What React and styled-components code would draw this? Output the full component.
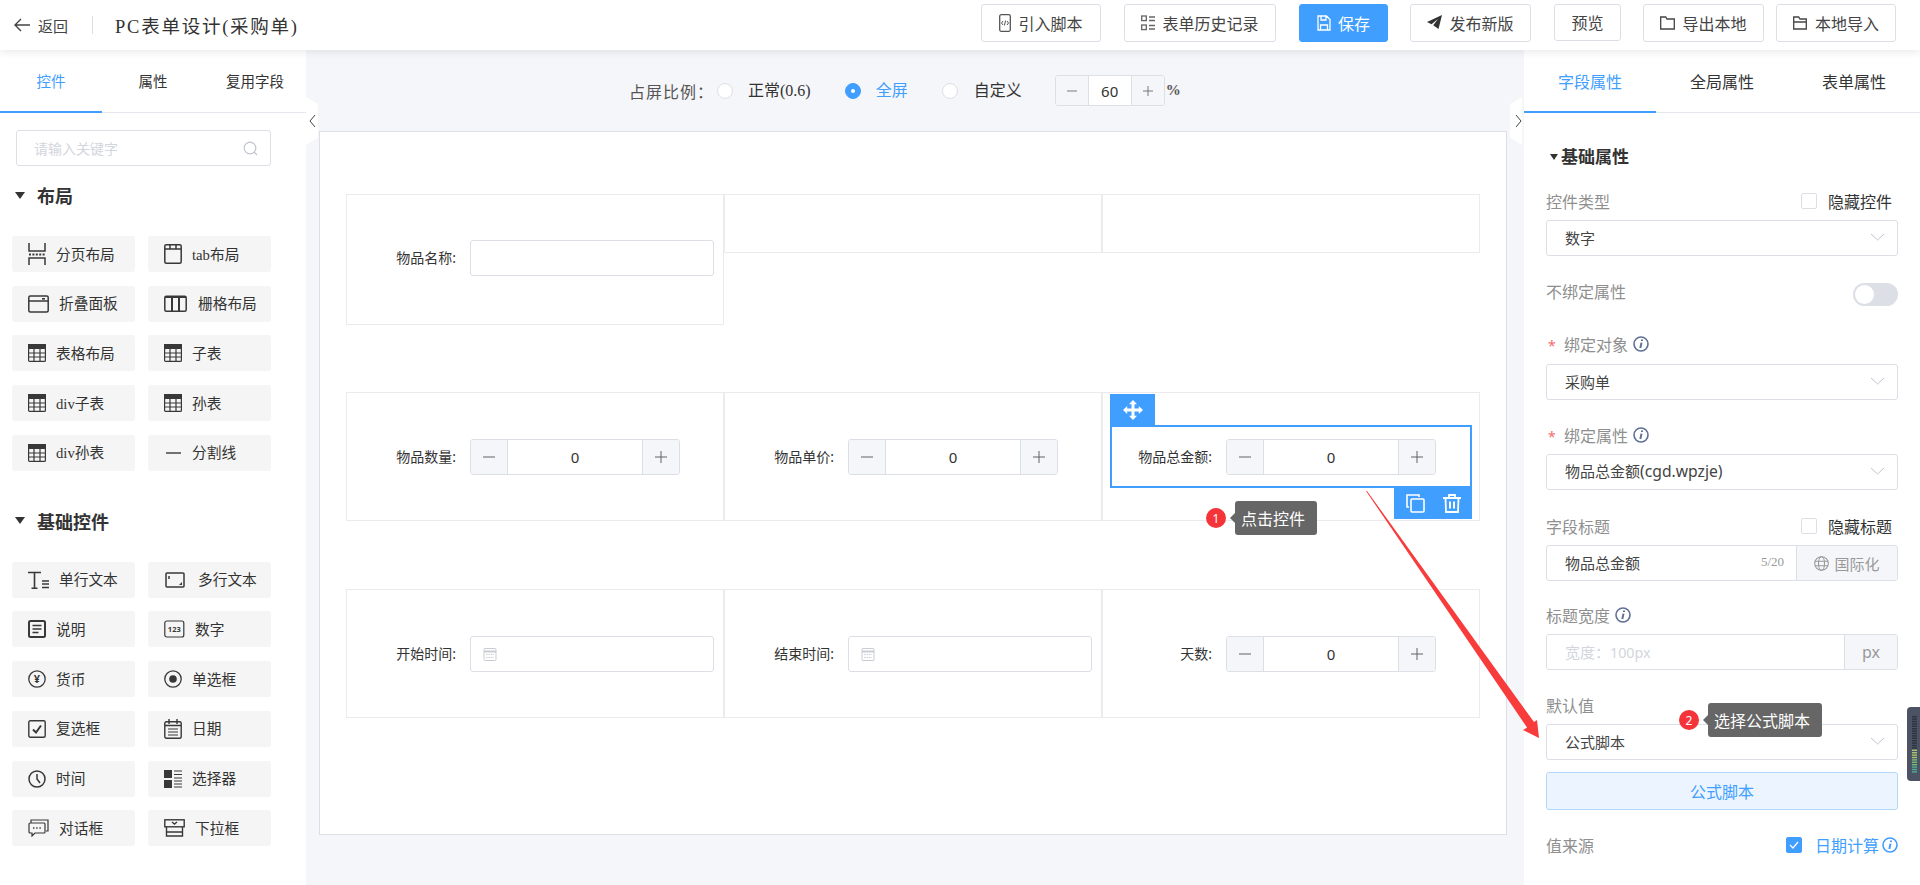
import React from "react";
import styled, { createGlobalStyle } from "styled-components";

const SERIF = `"Liberation Serif", "Noto Sans CJK SC", serif`;
const SANS = `"Noto Sans", "Noto Sans CJK SC", sans-serif`;
const BLUE = "#409eff";
const LINE = "#dcdfe6";

const Global = createGlobalStyle`
  html, body { margin: 0; padding: 0; background: #fff; overflow: hidden; }
  * { box-sizing: border-box; }
  body { font-family: ${SERIF}; color: #333; }
`;

const Page = styled.div`
  position: relative;
  width: 1920px;
  height: 885px;
  overflow: hidden;
  display: flex;
  flex-direction: column;
`;

const Header = styled.header`
  position: relative;
  z-index: 3;
  height: 50px;
  flex: none;
  display: flex;
  align-items: center;
  background: #fff;
  box-shadow: 0 2px 8px rgba(0, 0, 0, 0.09);
`;
const Back = styled.div`
  display: flex;
  align-items: center;
  gap: 8px;
  margin-left: 14px;
  font-size: 15px;
  color: #444;
`;
const Divider = styled.span`
  width: 1px;
  height: 18px;
  background: #dcdfe6;
  margin: 0 22px 0 24px;
`;
const Title = styled.h1`
  margin: 0;
  font-size: 18.5px;
  font-weight: 400;
  letter-spacing: 1.75px;
  color: #333;
  white-space: nowrap;
`;
const Actions = styled.div`
  margin-left: auto;
  margin-right: 24px;
  display: flex;
  align-items: flex-start;
  padding-bottom: 5px;
`;
const TopButton = styled.button`
  height: ${(p) => p.$h || 38}px;
  width: ${(p) => p.$w}px;
  margin-left: ${(p) => p.$gap}px;
  display: flex;
  align-items: center;
  justify-content: center;
  gap: 7px;
  padding: 0;
  border: 1px solid ${(p) => (p.$primary ? BLUE : LINE)};
  border-radius: 3px;
  background: ${(p) => (p.$primary ? BLUE : "#fff")};
  color: ${(p) => (p.$primary ? "#fff" : "#444")};
  font-family: ${SERIF};
  font-size: 16px;
`;

const Body = styled.div`
  position: relative;
  flex: 1;
  display: flex;
  min-height: 0;
`;

const LeftPanel = styled.aside`
  width: 306px;
  flex: none;
  background: #fff;
  display: flex;
  flex-direction: column;
`;
const TabBar = styled.div`
  height: 63px;
  flex: none;
  display: grid;
  grid-template-columns: repeat(3, 1fr);
  border-bottom: 1px solid #e4e7ed;
`;
const Tab = styled.div`
  display: flex;
  align-items: center;
  justify-content: center;
  font-size: ${(p) => p.$size}px;
  color: ${(p) => (p.$active ? BLUE : "#333")};
  margin-bottom: -1px;
  border-bottom: 2px solid ${(p) => (p.$active ? BLUE : "transparent")};
`;
const Search = styled.div`
  margin: 17px 0 0 16px;
  width: 255px;
  height: 36px;
  flex: none;
  display: flex;
  align-items: center;
  justify-content: space-between;
  padding: 0 12px 0 17px;
  border: 1px solid ${LINE};
  border-radius: 3px;
  font-size: 14px;
  color: #d3d6dc;
`;
const GroupTitle = styled.div`
  height: 30px;
  margin: ${(p) => p.$top}px 0 25px 15px;
  padding-bottom: 2px;
  flex: none;
  display: flex;
  align-items: center;
  gap: 12px;
  font-family: ${SANS};
  font-size: 18px;
  font-weight: 700;
  color: #333;
`;
const Caret = styled.span`
  width: 0;
  height: 0;
  border-left: ${(p) => p.$s || 5.5}px solid transparent;
  border-right: ${(p) => p.$s || 5.5}px solid transparent;
  border-top: 7px solid #333;
`;
const Palette = styled.div`
  display: grid;
  grid-template-columns: 123px 123px;
  grid-auto-rows: 36px;
  column-gap: 13px;
  row-gap: 13.7px;
  margin-left: 12px;
`;
const PaletteItem = styled.div`
  display: flex;
  align-items: center;
  gap: 10px;
  padding-left: 16px;
  background: #f5f5f5;
  border-radius: 3px;
  font-size: 14.7px;
  color: #333;
  white-space: nowrap;
`;
const PaletteName = styled.span`
  margin-top: -2px;
`;
const IconSlot = styled.span`
  flex: none;
  width: ${(p) => p.$w}px;
  display: flex;
  align-items: center;
  color: #383838;
`;

const Canvas = styled.main`
  flex: 1;
  min-width: 0;
  background: #f5f6fa;
  display: flex;
  flex-direction: column;
`;
const ScaleBar = styled.div`
  height: 81px;
  flex: none;
  display: flex;
  align-items: center;
  padding-left: 323px;
`;
const ScaleLabel = styled.span`
  font-size: 16px;
  letter-spacing: 1px;
  color: #555;
  width: 88px;
  white-space: nowrap;
`;
const RadioItem = styled.label`
  display: flex;
  align-items: center;
  gap: ${(p) => p.$inner || 15}px;
  margin-right: ${(p) => p.$gap}px;
  font-size: 16px;
  color: ${(p) => (p.$on ? BLUE : "#333")};
  white-space: nowrap;
`;
const RadioText = styled.span`
  margin-top: -3px;
`;
const RadioDot = styled.span`
  width: 16px;
  height: 16px;
  border-radius: 50%;
  display: flex;
  align-items: center;
  justify-content: center;
  background: ${(p) => (p.$on ? BLUE : "#fff")};
  border: 1px solid ${(p) => (p.$on ? BLUE : LINE)};
  &::after {
    content: "";
    width: 4px;
    height: 4px;
    border-radius: 50%;
    background: ${(p) => (p.$on ? "#fff" : "transparent")};
  }
`;
const Percent = styled.span`
  font-family: ${SERIF};
  font-size: 15px;
  font-weight: 700;
  margin-left: 1px;
  color: #555;
`;

const Stepper = styled.div`
  width: ${(p) => p.$w}px;
  height: ${(p) => p.$h}px;
  flex: none;
  display: grid;
  grid-template-columns: ${(p) => p.$side}px 1fr ${(p) => p.$side}px;
  border: 1px solid ${LINE};
  border-radius: 3px;
  overflow: hidden;
  background: #fff;
`;
const StepBtn = styled.span`
  display: flex;
  align-items: center;
  justify-content: center;
  background: #f5f6fa;
  color: #606266;
  &:first-child { border-right: 1px solid ${LINE}; }
  &:last-child { border-left: 1px solid ${LINE}; }
`;
const StepValue = styled.span`
  display: flex;
  align-items: center;
  justify-content: center;
  font-family: ${SANS};
  font-size: 15px;
  color: #333;
`;

const Sheet = styled.div`
  width: 1188px;
  height: 704px;
  margin-left: 13px;
  flex: none;
  background: #fff;
  border: 1px solid ${LINE};
  padding: 62px 0 0 26px;
`;
const Row = styled.div`
  display: grid;
  grid-template-columns: repeat(3, 378px);
  align-items: start;
  margin-bottom: ${(p) => p.$gap || 0}px;
`;
const Cell = styled.div`
  position: relative;
  height: ${(p) => p.$h}px;
  border: 1px solid #ebebee;
  display: flex;
  align-items: center;
  padding-bottom: ${(p) => p.$lift || 0}px;
`;
const FieldLabel = styled.span`
  width: 109px;
  margin-right: 14px;
  padding-bottom: 2px;
  flex: none;
  text-align: right;
  font-family: ${SANS};
  font-size: 14px;
  color: #333;
  white-space: nowrap;
`;
const TextBox = styled.div`
  width: 244px;
  height: 36px;
  flex: none;
  display: flex;
  align-items: center;
  padding-left: 12px;
  border: 1px solid ${LINE};
  border-radius: 3px;
  background: #fff;
`;
const SelectFrame = styled.div`
  position: absolute;
  left: 7px;
  right: 7px;
  top: 32px;
  height: 63px;
  border: 2px solid ${BLUE};
  pointer-events: none;
`;
const MoveHandle = styled.div`
  position: absolute;
  left: -2px;
  top: -33px;
  width: 45px;
  height: 31px;
  background: ${BLUE};
  display: flex;
  align-items: center;
  justify-content: center;
`;
const ActionTray = styled.div`
  position: absolute;
  right: -2px;
  top: 61px;
  width: 78px;
  height: 31px;
  background: ${BLUE};
  display: flex;
  align-items: center;
  justify-content: center;
  gap: 18px;
`;

const RightPanel = styled.aside`
  width: 396px;
  flex: none;
  background: #fff;
  display: flex;
  flex-direction: column;
`;
const RightBody = styled.div`
  padding: 0 22px;
  font-family: ${SANS};
`;
const SectionTitle = styled.div`
  height: 30px;
  margin-top: 28px;
  padding-left: 4px;
  padding-bottom: 2px;
  display: flex;
  align-items: center;
  gap: 3px;
  font-size: 17px;
  font-weight: 700;
  color: #333;
  ${Caret} { border-top-width: 6px; margin-top: 4px; }
`;
const PropRow = styled.div`
  height: 24px;
  margin-top: ${(p) => p.$top}px;
  display: flex;
  align-items: center;
  justify-content: space-between;
`;
const PropLabel = styled.span`
  display: flex;
  align-items: center;
  gap: 5px;
  padding-bottom: 2px;
  font-size: 16px;
  color: #8f8f8f;
  white-space: nowrap;
`;
const Star = styled.span`
  color: #f56c6c;
  font-size: 14px;
  width: 12px;
  margin-left: 2px;
  margin-right: -1px;
  margin-top: 2px;
`;
const CheckOption = styled.span`
  display: flex;
  align-items: center;
  gap: ${(p) => p.$gap ?? 12}px;
  margin-right: ${(p) => p.$right ?? 6}px;
  padding-bottom: 2px;
  font-size: 16px;
  color: ${(p) => (p.$blue ? BLUE : "#333")};
  white-space: nowrap;
`;
const TightInfo = styled.span`
  display: flex;
  margin-left: -10px;
`;
const Box = styled.span`
  width: 16px;
  height: 16px;
  flex: none;
  margin-left: ${(p) => (p.$on ? 0 : 1)}px;
  margin-right: ${(p) => (p.$on ? 0 : -1)}px;
  display: flex;
  align-items: center;
  justify-content: center;
  border-radius: 2px;
  border: 1px solid ${(p) => (p.$on ? BLUE : LINE)};
  background: ${(p) => (p.$on ? BLUE : "#fff")};
`;
const Select = styled.div`
  height: 36px;
  margin-top: ${(p) => p.$top || 6}px;
  display: flex;
  align-items: center;
  justify-content: space-between;
  padding: 0 12px 2px 18px;
  border: 1px solid ${LINE};
  border-radius: 3px;
  font-size: 15px;
  color: #444;
`;
const LatinValue = styled.span`
  font-size: ${(p) => p.$size}px;
`;
const Switch = styled.span`
  width: 45px;
  height: 23px;
  margin-top: 5px;
  border-radius: 12px;
  background: #dcdfe6;
  display: flex;
  align-items: center;
  padding-left: 2px;
  &::after {
    content: "";
    width: 19px;
    height: 19px;
    border-radius: 50%;
    background: #fff;
  }
`;
const InputGroup = styled.div`
  height: 36px;
  margin-top: 6px;
  display: grid;
  grid-template-columns: ${(p) => p.$cols};
  border: 1px solid ${LINE};
  border-radius: 3px;
  overflow: hidden;
`;
const GroupInput = styled.div`
  display: flex;
  align-items: center;
  justify-content: space-between;
  padding: 0 12px 2px 18px;
  font-size: 15px;
  color: ${(p) => (p.$placeholder ? "#d3d6dc" : "#444")};
`;
const Counter = styled.span`
  font-family: ${SERIF};
  font-size: 13px;
  color: #999;
`;
const Addon = styled.div`
  display: flex;
  align-items: center;
  justify-content: center;
  gap: 5px;
  background: #f5f6fa;
  border-left: 1px solid ${LINE};
  font-size: ${(p) => p.$size || 15}px;
  color: #999;
`;
const ScriptButton = styled.button`
  display: block;
  width: 100%;
  height: 38px;
  margin-top: 12px;
  border: 1px solid #b3d8ff;
  border-radius: 3px;
  background: #ecf5ff;
  color: ${BLUE};
  font-family: ${SANS};
  font-size: 16px;
`;

const Handle = styled.div`
  position: absolute;
  top: 47px;
  left: ${(p) => p.$left}px;
  width: 12px;
  height: 48px;
  background: #fff;
  clip-path: ${(p) =>
    p.$flip
      ? "polygon(0 15%, 100% 0, 100% 100%, 0 85%)"
      : "polygon(0 0, 100% 15%, 100% 85%, 0 100%)"};
  display: flex;
  align-items: center;
  justify-content: ${(p) => (p.$flip ? "flex-end" : "center")};
  z-index: 2;
`;
const Callout = styled.div`
  position: absolute;
  left: ${(p) => p.$left}px;
  top: ${(p) => p.$top}px;
  z-index: 5;
  display: flex;
  align-items: center;
  gap: 9px;
`;
const Badge = styled.span`
  width: 20px;
  height: 20px;
  border-radius: 50%;
  background: #f5343a;
  color: #fff;
  font-family: ${SANS};
  font-size: 12px;
  display: flex;
  align-items: center;
  justify-content: center;
`;
const Tip = styled.span`
  position: relative;
  height: 34px;
  padding: 0 12px 0 6px;
  display: flex;
  align-items: center;
  border-radius: 3px;
  background: #666;
  color: #fff;
  font-family: ${SANS};
  font-size: 16px;
  white-space: nowrap;
  &::before {
    content: "";
    position: absolute;
    left: -5px;
    top: 12px;
    border-top: 5px solid transparent;
    border-bottom: 5px solid transparent;
    border-right: 5px solid #666;
  }
`;
const ArrowLayer = styled.svg`
  position: absolute;
  left: 0;
  top: 0;
  z-index: 4;
  pointer-events: none;
`;
const MeterWidget = styled.svg`
  position: absolute;
  right: 0;
  top: 707px;
  z-index: 5;
`;

/* ---------- drawings ---------- */
const S = ({ w, h, children, sw = 1.5, color = "currentColor", fill = "none" }) => (
  <svg width={w} height={h} viewBox={`0 0 ${w} ${h}`} fill={fill} stroke={color} strokeWidth={sw}>
    {children}
  </svg>
);
const IPage = () => (
  <S w={18} h={22}><path d="M1 0v8h16V0" /><path d="M1 11.500h16" strokeDasharray="2 1.400" strokeWidth="2" /><path d="M1 22v-7h16v7" /></S>
);
const ITab = () => (
  <S w={18} h={20}><rect x=".8" y=".8" width="16.4" height="18.4" rx="1.5" /><path d="M1 5h16M6 1v4M12 1v4" /></S>
);
const ICollapse = () => (
  <S w={21} h={18}><rect x=".8" y="1" width="19.4" height="16" rx="1.5" /><path d="M1 6h19" /><path d="M14 3h3v1.6h-3z" fill="currentColor" stroke="none" /></S>
);
const IGrid = () => (
  <S w={24} h={17}><rect x=".8" y="1.2" width="21.4" height="15" rx="1.5" /><path d="M8 1v15M15 1v15" strokeWidth="2" /><path d="M1 2h21" strokeWidth="2" /></S>
);
const ITable = () => (
  <S w={18} h={18} sw={1.2}>
    <rect x=".6" y=".6" width="16.8" height="16.8" rx="1" />
    <path d="M0 0h18v5H0z" fill="currentColor" stroke="none" />
    <path d="M6 5v12M12 5v12M1 9h16M1 13h16" />
  </S>
);
const ILine = () => <S w={18} h={18} sw={1.4}><path d="M2 9h15" /></S>;
const IText = () => (
  <S w={21} h={18} sw={1.6}><path d="M0 1.5h13M6.5 1.5V18M3.5 17.4h6" /><path d="M14 10h7M14 13h7M14 16.5h7" strokeWidth="1.3" /></S>
);
const IArea = () => (
  <S w={24} h={16}><rect x="2" y="1" width="18" height="14" rx="1" /><path d="M5 4v3" /><path d="M18 13h-3l3-3z" fill="currentColor" stroke="none" /></S>
);
const INote = () => (
  <S w={18} h={18} sw={2}><rect x="1" y="1" width="16" height="16" rx="1.5" /><path d="M4.500 5.500h9M4.500 9h9M4.500 12.500h6" strokeWidth="1.6" /></S>
);
const INumber = () => (
  <S w={21} h={18} sw={1.2}>
    <rect x=".8" y="1" width="19" height="16" rx="2" />
    <text x="10.3" y="11.8" textAnchor="middle" fontSize="7.5" fontWeight="700" fontFamily={SANS} fill="currentColor" stroke="none">123</text>
  </S>
);
const ICurrency = () => (
  <S w={18} h={18} sw={1.3}>
    <circle cx="9" cy="9" r="8.2" />
    <text x="9" y="13" textAnchor="middle" fontSize="11" fontWeight="700" fontFamily={SANS} fill="currentColor" stroke="none">¥</text>
  </S>
);
const IRadio = () => (
  <S w={18} h={18} sw={1.3}><circle cx="9" cy="9" r="8.2" /><circle cx="9" cy="9" r="3.8" fill="currentColor" stroke="none" /></S>
);
const ICheck = () => (
  <S w={18} h={18} sw={1.4}><rect x=".8" y=".8" width="16.4" height="16.4" rx="1.5" /><path d="M5 9.500l3 3 5-7" strokeWidth="2" /></S>
);
const IDate = () => (
  <S w={18} h={20} sw={1.4}>
    <rect x=".8" y="2.8" width="16.4" height="16.4" rx="1.5" />
    <path d="M5 0v5M13 0v5M1 6.500h16" />
    <path d="M4 10h10M4 13h10M4 16h10" strokeWidth="1.2" />
  </S>
);
const IClock = () => (
  <S w={18} h={18} sw={1.5}><circle cx="9" cy="9" r="8" /><path d="M9 4v5l3 4" /></S>
);
const IPicker = () => (
  <S w={18} h={18} sw={1.2}>
    <path d="M0 0h8v8H0zM0 10h8v8H0z" fill="currentColor" stroke="none" />
    <path d="M10 1h8M10 4.500h8M10 8h8M10 11h8M10 14h8M10 17h8" />
  </S>
);
const IDialog = () => (
  <S w={21} h={18} sw={1.2}>
    <path d="M3 4V1h17v11h-2" />
    <path d="M2 4h14a1 1 0 0 1 1 1v8a1 1 0 0 1-1 1H7l-3 3v-3H2a1 1 0 0 1-1-1V5a1 1 0 0 1 1-1z" />
    <path d="M5 9h1.400M8.200 9h1.400M11.400 9h1.400" strokeWidth="1.6" />
  </S>
);
const IDrop = () => (
  <S w={21} h={18} sw={1.4}>
    <rect x=".8" y=".8" width="19.4" height="7" />
    <path d="M2.500 8v9h16V8M2.500 13h16M8 3l2.500 2L13 3" />
  </S>
);

const Chevron = ({ w = 15 }) => (
  <svg width={w} height="8" viewBox="0 0 15 8" fill="none" stroke="#c0c4cc"><path d="M1 1l6.500 6 6.500-6" /></svg>
);
const SideChevron = ({ flip }) => (
  <svg width="7" height="14" viewBox="0 0 7 14" fill="none" stroke="#444" style={flip ? { transform: "scaleX(-1)" } : undefined}>
    <path d="M6 1L1 7l5 6" />
  </svg>
);
const Minus = ({ s = 12 }) => (
  <svg width={s} height={s} viewBox="0 0 12 12" stroke="currentColor"><path d="M0 6h12" /></svg>
);
const Plus = ({ s = 12 }) => (
  <svg width={s} height={s} viewBox="0 0 12 12" stroke="currentColor"><path d="M0 6h12M6 0v12" /></svg>
);
const Info = ({ color = "#5f6f95" }) => (
  <svg width="16" height="16" viewBox="0 0 16 16" fill="none" stroke={color} strokeWidth="1.6">
    <circle cx="8" cy="8" r="7" />
    <path d="M9 3.600v1.300" strokeWidth="2" />
    <path d="M8.500 6.600l-1.200 5.400" strokeWidth="2" />
  </svg>
);
const CalendarMini = () => (
  <svg width="14" height="14" viewBox="0 0 14 14" fill="none" stroke="#c9ccd3">
    <rect x="1" y="1.500" width="12" height="12" rx="1" />
    <path d="M1 4.500h12" strokeWidth="2" />
    <path d="M3 7.500h8M3 10.500h8" strokeDasharray="1.500 1" />
  </svg>
);
const Stepbox = ({ value = "0" }) => (
  <Stepper $w={210} $h={36} $side={37}>
    <StepBtn><Minus /></StepBtn>
    <StepValue>{value}</StepValue>
    <StepBtn><Plus /></StepBtn>
  </Stepper>
);

const layoutItems = [
  ["分页布局", IPage, 18], ["tab布局", ITab, 18],
  ["折叠面板", ICollapse, 21], ["栅格布局", IGrid, 24],
  ["表格布局", ITable, 18], ["子表", ITable, 18],
  ["div子表", ITable, 18], ["孙表", ITable, 18],
  ["div孙表", ITable, 18], ["分割线", ILine, 18],
];
const basicItems = [
  ["单行文本", IText, 21], ["多行文本", IArea, 24],
  ["说明", INote, 18], ["数字", INumber, 21],
  ["货币", ICurrency, 18], ["单选框", IRadio, 18],
  ["复选框", ICheck, 18], ["日期", IDate, 18],
  ["时间", IClock, 18], ["选择器", IPicker, 18],
  ["对话框", IDialog, 21], ["下拉框", IDrop, 21],
];

const PaletteGrid = ({ items }) => (
  <Palette>
    {items.map(([name, Icon, w]) => (
      <PaletteItem key={name}>
        <IconSlot $w={w}><Icon /></IconSlot>
        <PaletteName>{name}</PaletteName>
      </PaletteItem>
    ))}
  </Palette>
);

export default function App() {
  return (
    <Page>
      <Global />
      <Header>
        <Back>
          <svg width="16" height="14" viewBox="0 0 16 14" fill="none" stroke="#444" strokeWidth="1.400"><path d="M16 7H1M7 1L1 7l6 6" /></svg>
          返回
        </Back>
        <Divider />
        <Title>PC表单设计(采购单)</Title>
        <Actions>
          <TopButton $w={120} $gap={0}>
            <svg width="12" height="18" viewBox="0 0 12 18" fill="none" stroke="#555" strokeWidth="1.300">
              <rect x=".7" y=".7" width="10.600" height="16.600" rx="1.500" />
              <path d="M4 7L2.500 9 4 11M8 7l1.500 2L8 11M6.600 6.500l-1.200 5" strokeWidth="1" />
            </svg>
            引入脚本
          </TopButton>
          <TopButton $w={152} $gap={23}>
            <svg width="14" height="16" viewBox="0 0 14 16" fill="none" stroke="#666" strokeWidth="1.300">
              <rect x=".7" y="1" width="4.600" height="4.600" />
              <rect x=".7" y="10" width="4.600" height="4.600" />
              <path d="M8 2h6M8 5.500h6M8 10.500h6M8 14h6" />
            </svg>
            表单历史记录
          </TopButton>
          <TopButton $w={89} $gap={23} $primary>
            <svg width="14" height="16" viewBox="0 0 14 16" fill="none" stroke="#fff" strokeWidth="1.300">
              <path d="M1 1h8.500L13 4.500V15H1zM4 1v4h5V1M3.500 15v-5h7v5" />
            </svg>
            保存
          </TopButton>
          <TopButton $w={121} $gap={22}>
            <svg width="15" height="15" viewBox="0 0 15 15" fill="#333"><path d="M15 0L0 7l4.500 2.200L11 4l-4.800 6.300L11.500 14z" /></svg>
            发布新版
          </TopButton>
          <TopButton $w={67} $gap={23} $h={37}>预览</TopButton>
          <TopButton $w={121} $gap={22}>
            <svg width="15" height="14" viewBox="0 0 15 14" fill="none" stroke="#444" strokeWidth="1.300"><path d="M.7 1h5l1.300 2h7.300v10H.7z" /></svg>
            导出本地
          </TopButton>
          <TopButton $w={120} $gap={12}>
            <svg width="15" height="14" viewBox="0 0 15 14" fill="none" stroke="#444" strokeWidth="1.300"><path d="M.7 13V1h5l1.300 2h6.300v3M.7 13h12.600V6H.7z" /></svg>
            本地导入
          </TopButton>
        </Actions>
      </Header>

      <Body>
        <LeftPanel>
          <TabBar>
            <Tab $active $size={14.500}>控件</Tab>
            <Tab $size={14.500}>属性</Tab>
            <Tab $size={14.500}>复用字段</Tab>
          </TabBar>
          <Search>
            请输入关键字
            <svg width="15" height="15" viewBox="0 0 15 15" fill="none" stroke="#c0c4cc" strokeWidth="1.200"><circle cx="7" cy="7" r="5.800" /><path d="M11 11l3 3" /></svg>
          </Search>
          <GroupTitle $top={15}><Caret />布局</GroupTitle>
          <PaletteGrid items={layoutItems} />
          <GroupTitle $top={36}><Caret />基础控件</GroupTitle>
          <PaletteGrid items={basicItems} />
        </LeftPanel>

        <Canvas>
          <ScaleBar>
            <ScaleLabel>占屏比例：</ScaleLabel>
            <RadioItem $gap={34}><RadioDot /><RadioText>正常(0.6)</RadioText></RadioItem>
            <RadioItem $on $gap={34}><RadioDot $on /><RadioText>全屏</RadioText></RadioItem>
            <RadioItem $gap={33} $inner={16}><RadioDot /><RadioText>自定义</RadioText></RadioItem>
            <Stepper $w={110} $h={31} $side={33}>
              <StepBtn><Minus s={10} /></StepBtn>
              <StepValue>60</StepValue>
              <StepBtn><Plus s={10} /></StepBtn>
            </Stepper>
            <Percent>%</Percent>
          </ScaleBar>
          <Sheet>
            <Row $gap={67}>
              <Cell $h={131} $lift={3}>
                <FieldLabel>物品名称:</FieldLabel>
                <TextBox />
              </Cell>
              <Cell $h={59} />
              <Cell $h={59} />
            </Row>
            <Row $gap={68}>
              <Cell $h={129}>
                <FieldLabel>物品数量:</FieldLabel>
                <Stepbox />
              </Cell>
              <Cell $h={129}>
                <FieldLabel>物品单价:</FieldLabel>
                <Stepbox />
              </Cell>
              <Cell $h={129}>
                <FieldLabel>物品总金额:</FieldLabel>
                <Stepbox />
                <SelectFrame>
                  <MoveHandle>
                    <svg width="20" height="20" viewBox="0 0 20 20" fill="#fff">
                      <path d="M10 0l4 4.200h-2.500V8.500h4.300V6l4.200 4-4.200 4v-2.500h-4.300v4.300H14L10 20l-4-4.200h2.500v-4.300H4.200V14L0 10l4.200-4v2.500h4.300V4.200H6z" />
                    </svg>
                  </MoveHandle>
                  <ActionTray>
                    <svg width="19" height="19" viewBox="0 0 19 19" fill="none" stroke="#fff" strokeWidth="1.600">
                      <path d="M13 3V1H1v12h2" />
                      <rect x="5" y="5" width="13" height="13" rx="1" />
                    </svg>
                    <svg width="18" height="19" viewBox="0 0 18 19" fill="none" stroke="#fff" strokeWidth="1.800">
                      <path d="M0 4h18M6 4V1h6v3M2.500 4l.5 14h12l.5-14" />
                      <path d="M7 7.500v7M11 7.500v7" strokeWidth="2" />
                    </svg>
                  </ActionTray>
                </SelectFrame>
              </Cell>
            </Row>
            <Row>
              <Cell $h={129}>
                <FieldLabel>开始时间:</FieldLabel>
                <TextBox><CalendarMini /></TextBox>
              </Cell>
              <Cell $h={129}>
                <FieldLabel>结束时间:</FieldLabel>
                <TextBox><CalendarMini /></TextBox>
              </Cell>
              <Cell $h={129}>
                <FieldLabel>天数:</FieldLabel>
                <Stepbox />
              </Cell>
            </Row>
          </Sheet>
        </Canvas>

        <RightPanel>
          <TabBar>
            <Tab $active $size={16}>字段属性</Tab>
            <Tab $size={16}>全局属性</Tab>
            <Tab $size={16}>表单属性</Tab>
          </TabBar>
          <RightBody>
            <SectionTitle><Caret $s={4.500} />基础属性</SectionTitle>
            <PropRow $top={19}>
              <PropLabel>控件类型</PropLabel>
              <CheckOption><Box />隐藏控件</CheckOption>
            </PropRow>
            <Select>数字<Chevron /></Select>
            <PropRow $top={24}>
              <PropLabel>不绑定属性</PropLabel>
              <Switch />
            </PropRow>
            <PropRow $top={29}>
              <PropLabel><Star>*</Star>绑定对象<Info /></PropLabel>
            </PropRow>
            <Select $top={7}>采购单<Chevron /></Select>
            <PropRow $top={24}>
              <PropLabel><Star>*</Star>绑定属性<Info /></PropLabel>
            </PropRow>
            <Select><span>物品总金额<LatinValue $size={15.700}>(cgd.wpzje)</LatinValue></span><Chevron /></Select>
            <PropRow $top={25}>
              <PropLabel>字段标题</PropLabel>
              <CheckOption><Box />隐藏标题</CheckOption>
            </PropRow>
            <InputGroup $cols="249px 1fr">
              <GroupInput>物品总金额<Counter>5/20</Counter></GroupInput>
              <Addon>
                <svg width="15" height="15" viewBox="0 0 15 15" fill="none" stroke="#999" strokeWidth="1.100">
                  <circle cx="7.500" cy="7.500" r="6.800" />
                  <ellipse cx="7.500" cy="7.500" rx="3" ry="6.800" />
                  <path d="M1 5.200h13M1 9.800h13" />
                </svg>
                国际化
              </Addon>
            </InputGroup>
            <PropRow $top={23}>
              <PropLabel>标题宽度<Info /></PropLabel>
            </PropRow>
            <InputGroup $cols="297px 1fr">
              <GroupInput $placeholder><span>宽度：<LatinValue $size={14.300}>100px</LatinValue></span></GroupInput>
              <Addon $size={16}>px</Addon>
            </InputGroup>
            <PropRow $top={24}>
              <PropLabel>默认值</PropLabel>
            </PropRow>
            <Select>公式脚本<Chevron /></Select>
            <ScriptButton>公式脚本</ScriptButton>
            <PropRow $top={24}>
              <PropLabel>值来源</PropLabel>
              <CheckOption $blue $gap={13} $right={0}>
                <Box $on>
                  <svg width="10" height="8" viewBox="0 0 10 8" fill="none" stroke="#fff" strokeWidth="1.200"><path d="M1 4l3 3 5-6" /></svg>
                </Box>
                <span>日期计算</span>
                <TightInfo><Info color={BLUE} /></TightInfo>
              </CheckOption>
            </PropRow>
          </RightBody>
        </RightPanel>

        <Handle $left={306}><SideChevron /></Handle>
        <Handle $left={1510} $flip><SideChevron flip /></Handle>
      </Body>

      <ArrowLayer width="1920" height="885" viewBox="0 0 1920 885">
        <path d="M1366 491l1.200.3L1534 722l3-2 2 18-16-8 4-2.500z" fill="#f83b3b" />
      </ArrowLayer>

      <Callout $left={1206} $top={501}><Badge>1</Badge><Tip>点击控件</Tip></Callout>
      <Callout $left={1679} $top={703}><Badge>2</Badge><Tip>选择公式脚本</Tip></Callout>

      <MeterWidget width="13" height="74" viewBox="0 0 13 74">
        <path d="M13 0H4a4 4 0 0 0-4 4v66a4 4 0 0 0 4 4h9z" fill="#4b5364" />
        {Array.from({ length: 24 }).map((_, i) => (
          <rect
            key={i}
            x="5"
            y={9 + i * 2.400}
            width="5"
            height="1.400"
            fill={i < 14 ? "#2c3240" : i < 18 ? "#a9c46a" : i < 21 ? "#79bd78" : "#4fae93"}
          />
        ))}
      </MeterWidget>
    </Page>
  );
}
